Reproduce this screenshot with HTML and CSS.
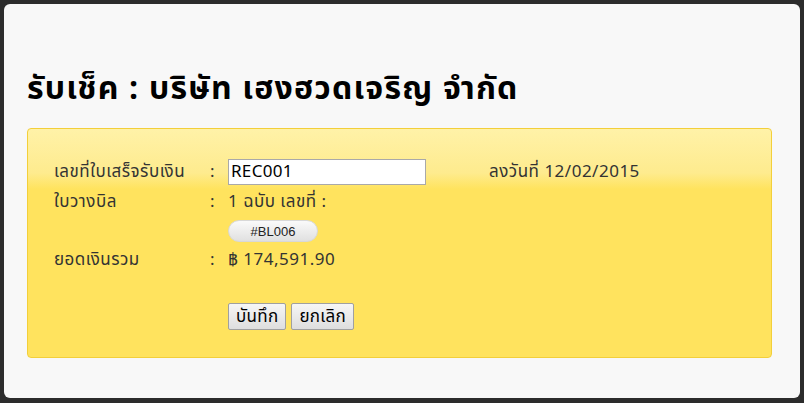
FILE: index.html
```html
<!DOCTYPE html>
<html lang="th">
<head>
    <meta charset="UTF-8">
    <meta name="viewport" content="width=device-width, initial-scale=1.0">
    <title>รับเช็ค</title>
    <link rel="stylesheet" href="styles.css">
</head>
<body>
    <div class="overlay">
        <div class="modal">
            <h2 class="modal-title">รับเช็ค : บริษัท เฮงฮวดเจริญ จำกัด</h2>
            <div class="panel">
                <div class="form-row">
                    <span class="label">เลขที่ใบเสร็จรับเงิน</span>
                    <span class="colon">:</span>
                    <div class="value">
                        <input class="field" type="text" value="REC001">
                        <span class="date">ลงวันที่ 12/02/2015</span>
                    </div>
                </div>
                <div class="form-row">
                    <span class="label">ใบวางบิล</span>
                    <span class="colon">:</span>
                    <div class="value">1 ฉบับ เลขที่ :</div>
                </div>
                <div class="form-row tag-row">
                    <span class="label"></span>
                    <span class="colon"></span>
                    <div class="value"><span class="tag">#BL006</span></div>
                </div>
                <div class="form-row">
                    <span class="label">ยอดเงินรวม</span>
                    <span class="colon">:</span>
                    <div class="value">฿ 174,591.90</div>
                </div>
                <div class="form-row actions">
                    <span class="label"></span>
                    <span class="colon"></span>
                    <div class="value">
                        <button class="btn">บันทึก</button>
                        <button class="btn">ยกเลิก</button>
                    </div>
                </div>
            </div>
        </div>
    </div>
</body>
</html>
```

FILE: styles.css
```css
* {
    box-sizing: border-box;
    margin: 0;
    padding: 0;
}
body {
    background: #2c2c2c;
    font-family: Tahoma, "Noto Sans Thai", "Loma", "Garuda", sans-serif;
    width: 804px;
    height: 403px;
    overflow: hidden;
}
.overlay {
    height: 403px;
    padding: 4px 4px 5px 4px;
}
.modal {
    background: #f8f8f8;
    border-radius: 6px;
    height: 100%;
    padding: 67px 28px 0 23px;
}
.modal-title {
    font-size: 32px;
    font-weight: bold;
    letter-spacing: 1.2px;
    color: #000;
    line-height: 36px;
    margin-bottom: 21px;
}
.panel {
    height: 230px;
    border: 1px solid #f3cf3a;
    border-radius: 4px;
    background: linear-gradient(to bottom, #fff2a8 0, #feeb8e 44px, #ffe35e 60px, #ffe35e 100%);
    padding: 28px 26px 0 26px;
    color: #333;
    font-size: 17px;
    letter-spacing: 0.5px;
}
.form-row {
    display: flex;
    align-items: center;
    min-height: 30px;
}
.tag-row {
    min-height: 28px;
}
.label {
    width: 156px;
}
.colon {
    width: 18px;
}
.value {
    display: flex;
    align-items: center;
}
.field {
    width: 198px;
    height: 26px;
    border: 1px solid #a9a9a9;
    background: #fff;
    font-family: inherit;
    font-size: 17px;
    letter-spacing: 0.3px;
    color: #000;
    padding: 0 2px;
}
.date {
    margin-left: 63px;
}
.tag {
    display: inline-block;
    width: 90px;
    height: 22px;
    line-height: 22px;
    text-align: center;
    border-radius: 11px;
    border: 1px solid #d8d8d8;
    background: linear-gradient(to bottom, #fafafa, #e0e0e0);
    font-family: Arial, "Liberation Sans", sans-serif;
    font-size: 13px;
    letter-spacing: 0;
    color: #222;
}
.actions {
    margin-top: 26px;
}
.btn {
    font-family: inherit;
    font-size: 17px;
    letter-spacing: 0.3px;
    color: #000;
    height: 27px;
    padding: 0 7px;
    margin-right: 5px;
    border: 1px solid #a0a0a0;
    border-radius: 2px;
    background: linear-gradient(to bottom, #f6f6f6, #dedede);
}
```
